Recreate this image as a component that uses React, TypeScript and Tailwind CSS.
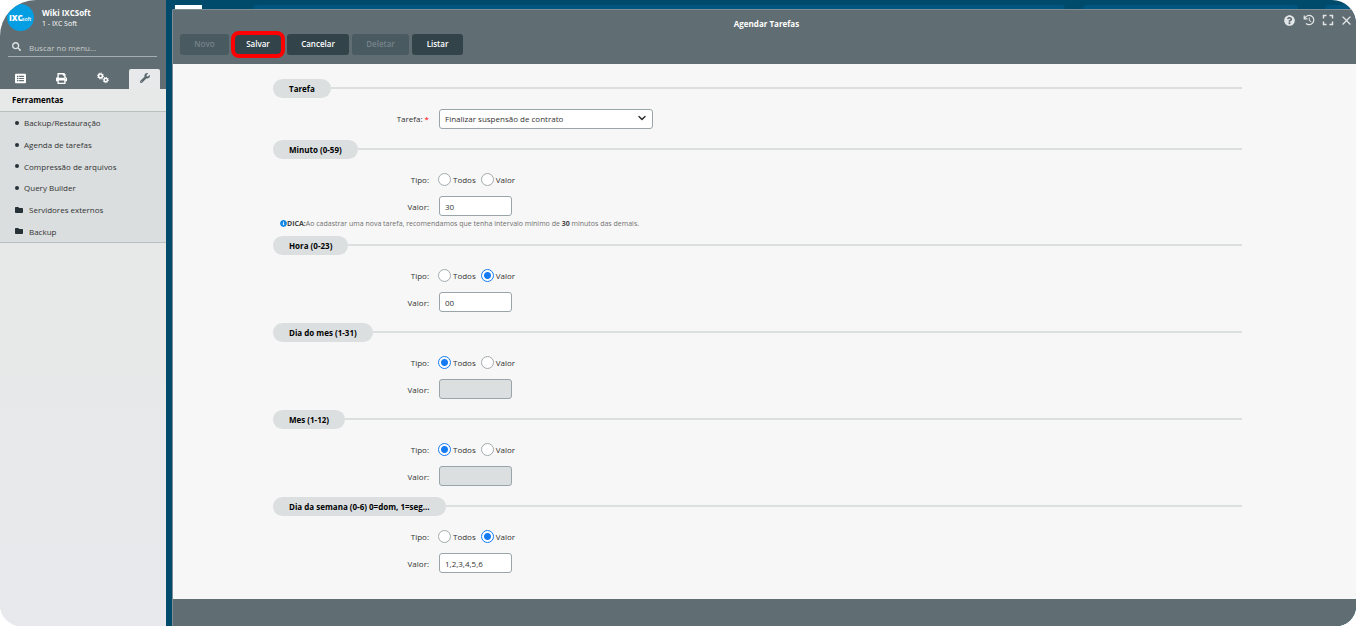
import { useState } from "react";
import {
  FaSearch,
  FaListAlt,
  FaPrint,
  FaWrench,
  FaFolder,
  FaQuestionCircle,
  FaInfoCircle,
} from "react-icons/fa";
import { MdFullscreen, MdClose } from "react-icons/md";
import { ChevronDown } from "lucide-react";

type Tipo = "todos" | "valor" | "";

const MENU_ITEMS = [
  { label: "Backup/Restauração" },
  { label: "Agenda de tarefas" },
  { label: "Compressão de arquivos" },
  { label: "Query Builder" },
  { label: "Servidores externos", folder: true },
  { label: "Backup", folder: true },
];

const TABS = [
  { label: "Cadastros", icon: FaListAlt },
  { label: "Relatórios", icon: FaPrint },
  { label: "Configurações", icon: GearsIcon },
  { label: "Ferramentas", icon: FaWrench, active: true },
];

const FIELDS: { id: string; title: string; tipo: Tipo; valor: string; hint?: boolean }[] = [
  { id: "minuto", title: "Minuto (0-59)", tipo: "", valor: "30", hint: true },
  { id: "hora", title: "Hora (0-23)", tipo: "valor", valor: "00" },
  { id: "dia", title: "Dia do mes (1-31)", tipo: "todos", valor: "" },
  { id: "mes", title: "Mes (1-12)", tipo: "todos", valor: "" },
  { id: "semana", title: "Dia da semana (0-6) 0=dom, 1=seg...", tipo: "valor", valor: "1,2,3,4,5,6" },
];

function GearsIcon({ className }: { className?: string }) {
  return (
    <svg viewBox="0 0 24 24" className={className} fill="none" stroke="currentColor">
      <circle cx="7" cy="8" r="3.8" strokeWidth="3" />
      <circle cx="7" cy="8" r="6" strokeWidth="2" strokeDasharray="2.4 2.3" />
      <circle cx="17.5" cy="16" r="3.4" strokeWidth="3" />
      <circle cx="17.5" cy="16" r="5.4" strokeWidth="2" strokeDasharray="2.2 2" />
    </svg>
  );
}

function HistoryIcon({ className }: { className?: string }) {
  return (
    <svg viewBox="0 0 24 24" className={className} fill="none" stroke="currentColor" strokeWidth="2.5">
      <path d="M2.5 3v6.5H9" />
      <path d="M3.5 9A9.3 9.3 0 1 1 6 19" />
      <path d="M12.5 7v6l4 2.5" strokeWidth="2" />
    </svg>
  );
}

function SectionTitle({ title }: { title: string }) {
  return (
    <div className="flex items-start">
      <h2 className="h-[19px] rounded-full bg-[#dbdfe0] px-4 text-[8px] leading-[19px] font-bold text-black">
        {title}
      </h2>
      <div className="mt-2 h-0.5 flex-1 bg-[#dbdfe0]" />
    </div>
  );
}

function Radio({ name, label, checked, onChange }: {
  name: string;
  label: string;
  checked: boolean;
  onChange: () => void;
}) {
  return (
    <label className="flex items-center gap-0.5">
      <input
        type="radio"
        name={name}
        checked={checked}
        onChange={onChange}
        className="size-[13px] appearance-none rounded-full border border-[#a3abae] bg-white checked:border-[#147bf5] checked:bg-[radial-gradient(circle,#147bf5_3px,white_4px)]"
      />
      {label}
    </label>
  );
}

function CronField({ id, title, tipo: initial, valor, hint }: (typeof FIELDS)[number]) {
  const [tipo, setTipo] = useState<Tipo>(initial);
  const [value, setValue] = useState(valor);

  return (
    <section className={hint ? "pb-2" : "pb-[11px]"}>
      <SectionTitle title={title} />
      <div className="mt-3.5 grid grid-cols-[156px_1fr] items-center gap-x-[9px]">
        <span className="text-right">Tipo:</span>
        <div className="flex h-[13px] gap-[5px]">
          <Radio name={id} label="Todos" checked={tipo === "todos"} onChange={() => setTipo("todos")} />
          <Radio name={id} label="Valor" checked={tipo === "valor"} onChange={() => setTipo("valor")} />
        </div>
      </div>
      <div className="mt-2.5 grid grid-cols-[156px_1fr] items-center gap-x-2.5">
        <label htmlFor={id} className="text-right">Valor:</label>
        <input
          id={id}
          type="text"
          value={value}
          disabled={tipo === "todos"}
          onChange={(e) => setValue(e.target.value)}
          className="h-5 w-[73px] rounded-[3px] border border-[#9aa5a9] bg-white px-[5px] disabled:bg-[#dbdfe0]"
        />
      </div>
      {hint && (
        <p className="mt-[3px] ml-[7px] flex h-[9px] items-center text-[7px] text-[#707070]">
          <FaInfoCircle className="size-[7px] text-[#0d87e9]" />
          <span>
            <b className="text-[#444]">DICA:</b>Ao cadastrar uma nova tarefa, recomendamos que tenha
            intervalo mínimo de <b className="text-[#444]">30</b> minutos das demais.
          </span>
        </p>
      )}
    </section>
  );
}

function Sidebar() {
  return (
    <aside className="flex w-[166px] shrink-0 flex-col bg-[#e7e9ea]">
      <div className="flex h-[89px] flex-col bg-[#606d72]">
        <div className="flex items-center gap-2 pt-1 pl-[7px]">
          <svg viewBox="0 0 27 27" className="size-[27px]" role="img" aria-label="IXCsoft">
            <circle cx="13.5" cy="13.5" r="13.5" fill="#069ee3" />
            <text x="2" y="17" fill="#fff" fontFamily="Open Sans, sans-serif" fontSize="8" fontWeight="800">
              IXC
            </text>
            <text x="15" y="17" fill="#fff" fontFamily="Open Sans, sans-serif" fontSize="5" fontWeight="600">
              soft
            </text>
          </svg>
          <div className="text-white">
            <div className="text-[8px] leading-[11px] font-bold">Wiki IXCSoft</div>
            <div className="text-[7px] leading-[11px]">1 - IXC Soft</div>
          </div>
        </div>
        <label className="mt-[7px] mr-[9px] ml-2 flex h-[19px] border-b border-[#a5adb0] pl-1">
          <FaSearch className="mt-1 size-[9px] shrink-0 text-[#dfe2e3]" />
          <input
            type="text"
            aria-label="Buscar no menu"
            placeholder="Buscar no menu..."
            className="ml-2 w-full min-w-0 outline-none placeholder:text-[#c7cccd]"
          />
        </label>
        <nav className="mt-auto flex h-5 pr-1.5">
          {TABS.map(({ label, icon: Icon, active }) => (
            <button
              key={label}
              aria-label={label}
              className={`flex items-center justify-center pb-0.5 ${
                active ? "ml-auto w-[31px] rounded-t-xs bg-[#e7e9ea] text-[#5d696e]" : "w-[41px] text-white"
              }`}
            >
              <Icon className={active ? "size-2.5" : label === "Configurações" ? "size-3" : "size-[11px]"} />
            </button>
          ))}
        </nav>
      </div>
      <h2 className="h-[22px] bg-[#e7e9e8] pl-3 text-[8px] leading-[22px] font-bold text-black">Ferramentas</h2>
      <ul className="flex h-[132px] flex-col border-y border-[#b9c0c2] bg-[#dadedf] text-[#333]">
        {MENU_ITEMS.map(({ label, folder }) => (
          <li key={label} className="flex-1">
            <a href="#" className="flex h-full items-center pl-[15px]">
              {folder ? (
                <FaFolder className="mr-1.5 size-2 text-[#263238]" />
              ) : (
                <span className="mr-[5px] size-1 rounded-full bg-[#263238]" />
              )}
              {label}
            </a>
          </li>
        ))}
      </ul>
      <div className="flex-1 bg-linear-to-b from-[#e7e9e8] to-[#e7e9ec]" />
    </aside>
  );
}

function Toolbar() {
  const base = "h-[21px] rounded-[3px] bg-[#32434a] pb-0.5 font-semibold text-white disabled:bg-[#4a5a61] disabled:text-[#75838a]";
  return (
    <div className="flex gap-[3px] pl-[7px]">
      <button disabled className={`${base} w-[49px]`}>Novo</button>
      <button className={`${base} relative w-[52px]`}>
        Salvar
        <span className="absolute -inset-x-px -inset-y-[3px] rounded-lg border-4 border-[#f00]" />
      </button>
      <button className={`${base} w-[62px]`}>Cancelar</button>
      <button disabled className={`${base} w-[57px]`}>Deletar</button>
      <button className={`${base} w-[51px]`}>Listar</button>
    </div>
  );
}

export default function App() {
  return (
    <div className="flex min-h-screen overflow-hidden rounded-tl-[36px] rounded-tr-3xl rounded-br-[20px] rounded-bl-[21px] font-['Open_Sans',sans-serif] text-[8px] leading-[11px] text-[#333]">
      <Sidebar />
      <div className="flex flex-1 flex-col bg-[#004a6b] pl-1.5">
        {/* Top bar of the page behind the window */}
        <div className="flex h-[9px] items-end pr-[7px] pl-[3px]">
          <div className="mr-[51px] h-1 w-[27px] bg-white" />
          <div className="h-1 flex-1 rounded-t-full bg-[#00567f]" />
          <div className="ml-[18px] h-1 w-[215px] rounded-t-full bg-[#00567f]" />
          <div className="ml-[27px] h-1 w-6 rounded-t-full bg-[#00567f]" />
        </div>
        <main className="flex flex-1 flex-col rounded-tl-xs border-t border-l border-[#7e8e96] bg-[#606d72]">
          <header className="flex h-[54px] flex-col">
            <div className="relative flex h-6 items-center justify-center pt-[3px] pl-1">
              <h1 className="font-bold text-white">Agendar Tarefas</h1>
              <div className="absolute top-0 right-0 flex text-[#e3e6e7]">
                <button aria-label="Ajuda" className="flex h-5 w-[19px] items-center justify-center">
                  <FaQuestionCircle className="size-[11px]" />
                </button>
                <button aria-label="Histórico" className="flex h-5 w-[19px] items-center justify-center">
                  <HistoryIcon className="size-3" />
                </button>
                <button aria-label="Tela cheia" className="flex h-5 w-[19px] items-center justify-center">
                  <MdFullscreen className="size-[18px]" />
                </button>
                <button aria-label="Fechar" className="flex h-5 w-[19px] items-center justify-center">
                  <MdClose className="size-[15px]" />
                </button>
              </div>
            </div>
            <Toolbar />
          </header>
          <form className="flex-1 bg-[#f7f7f7] pt-[15px] pr-[114px] pl-[100px]" onSubmit={(e) => e.preventDefault()}>
            <section className="pb-[11px]">
              <SectionTitle title="Tarefa" />
              <div className="mt-[11px] grid grid-cols-[156px_1fr] items-center gap-x-2.5">
                <label htmlFor="tarefa" className="pb-px text-right">
                  Tarefa: <span className="text-[#f00]">*</span>
                </label>
                <div className="relative w-[214px]">
                  <select
                    id="tarefa"
                    className="block h-5 w-full appearance-none rounded-[3px] border border-[#9aa5a9] bg-white px-[5px] pb-px"
                  >
                    <option>Finalizar suspensão de contrato</option>
                  </select>
                  <ChevronDown
                    strokeWidth={3}
                    className="pointer-events-none absolute top-[3px] right-[5px] size-3"
                  />
                </div>
              </div>
            </section>
            {FIELDS.map((field) => (
              <CronField key={field.id} {...field} />
            ))}
          </form>
          <footer className="h-[27px]" />
        </main>
      </div>
    </div>
  );
}
